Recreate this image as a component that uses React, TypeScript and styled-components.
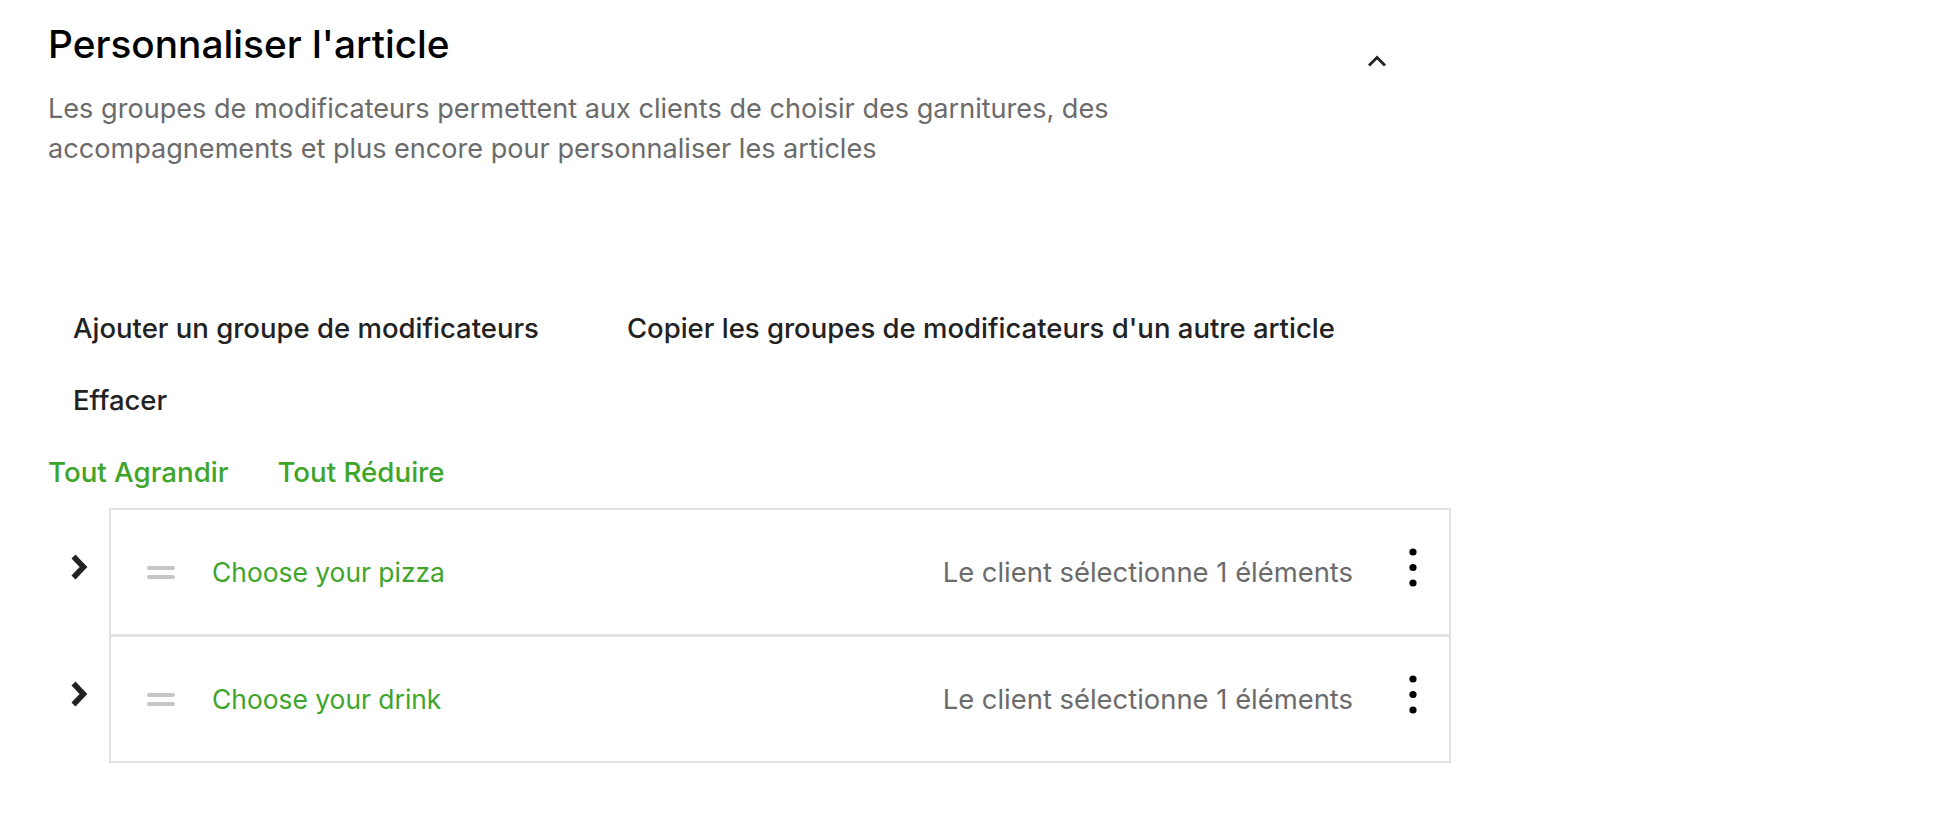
import styled, { createGlobalStyle } from 'styled-components';

const GlobalStyle = createGlobalStyle`
  body {
    margin: 0;
    background: #fff;
    font-family: Inter, 'Liberation Sans', sans-serif;
  }
`;

const Page = styled.div`
  padding: 22px 0 40px 48px;
  width: 1404px;
`;

const Header = styled.header`
  display: flex;
  justify-content: space-between;
  align-items: flex-start;
  width: 1349px;
`;

const HeaderText = styled.div`
  display: flex;
  flex-direction: column;
`;

const Title = styled.h1`
  margin: 0;
  font-size: 38.8px;
  line-height: 44px;
  font-weight: 500;
  color: #000;
`;

const Description = styled.p`
  margin: 23px 0 0;
  max-width: 1100px;
  font-size: 27.1px;
  line-height: 40px;
  color: #6b6b6b;
`;

const CollapseButton = styled.button`
  display: flex;
  align-items: center;
  justify-content: center;

  width: 40px;
  height: 40px;
  margin-top: 19px;

  padding: 0;
  border: none;
  background: none;
  cursor: pointer;
`;

const Actions = styled.div`
  display: flex;
  flex-wrap: wrap;
  column-gap: 38px;
  row-gap: 16px;

  max-width: 1380px;
  margin-top: 131px;
`;

const ActionButton = styled.button`
  height: 56px;
  padding: 0 25px;

  border: none;
  background: none;

  font-family: inherit;
  font-size: 27.5px;
  font-weight: 500;
  color: #222;
  cursor: pointer;
`;

const Toggles = styled.div`
  display: flex;
  gap: 49px;
  margin-top: 28px;
`;

const ToggleLink = styled.button`
  padding: 0;
  border: none;
  background: none;

  font-family: inherit;
  font-size: 27.7px;
  line-height: 32px;
  font-weight: 500;
  color: #3ea52a;
  cursor: pointer;
`;

const Groups = styled.div`
  display: flex;
  flex-direction: column;
  margin-top: 20px;
`;

const GroupLine = styled.div`
  display: flex;
  align-items: stretch;
`;

const Expander = styled.button`
  display: flex;
  align-items: center;
  justify-content: center;

  width: 61px;
  padding: 0 0 11px 0;

  border: none;
  background: none;
  cursor: pointer;
`;

const GroupRow = styled.div<{ $first?: boolean }>`
  display: flex;
  align-items: center;

  width: 1338px;
  height: 124px;

  border: 2px solid #e2e2e2;
  border-top-width: ${({ $first }) => ($first ? '2px' : '1px')};
`;

const Handle = styled.div`
  display: flex;
  flex-direction: column;
  gap: 5px;

  margin-left: 36px;

  span {
    display: block;
    width: 28px;
    height: 4px;
    border-radius: 2px;
    background: #c6c6c6;
  }
`;

const GroupName = styled.span`
  flex: 1;
  margin-left: 37px;

  font-size: 26.4px;
  color: #3ea52a;
`;

const GroupRule = styled.span`
  font-size: 27.4px;
  color: #6b6b6b;
`;

const MoreButton = styled.button`
  display: flex;
  align-items: center;
  justify-content: center;

  width: 40px;
  height: 48px;
  margin: 0 16px 0 40px;

  padding: 0 0 8px;
  border: none;
  background: none;
  cursor: pointer;
`;

const ChevronUp = () => (
  <svg width="20" height="12" viewBox="0 0 20 12">
    <path d="M2 10.5 L10 2.5 L18 10.5" fill="none" stroke="#222" strokeWidth="2.8" />
  </svg>
);

const ChevronRight = () => (
  <svg width="20" height="26" viewBox="0 0 20 26">
    <path d="M4.5 2.5 L14.5 13 L4.5 23.5" fill="none" stroke="#222" strokeWidth="5.6" />
  </svg>
);

const Kebab = () => (
  <svg width="10" height="40" viewBox="0 0 10 40">
    <circle cx="5" cy="4" r="3.6" fill="#000" />
    <circle cx="5" cy="19.5" r="3.6" fill="#000" />
    <circle cx="5" cy="35" r="3.6" fill="#000" />
  </svg>
);

const groups = [
  { name: 'Choose your pizza', rule: 'Le client sélectionne 1 éléments' },
  { name: 'Choose your drink', rule: 'Le client sélectionne 1 éléments' },
];

const App = () => {
  return (
    <Page>
      <GlobalStyle />
      <Header>
        <HeaderText>
          <Title>Personnaliser l'article</Title>
          <Description>
            Les groupes de modificateurs permettent aux clients de choisir des garnitures, des accompagnements et plus
            encore pour personnaliser les articles
          </Description>
        </HeaderText>
        <CollapseButton aria-label="Réduire">
          <ChevronUp />
        </CollapseButton>
      </Header>

      <Actions>
        <ActionButton>Ajouter un groupe de modificateurs</ActionButton>
        <ActionButton>Copier les groupes de modificateurs d'un autre article</ActionButton>
        <ActionButton>Effacer</ActionButton>
      </Actions>

      <Toggles>
        <ToggleLink>Tout Agrandir</ToggleLink>
        <ToggleLink>Tout Réduire</ToggleLink>
      </Toggles>

      <Groups>
        {groups.map((group, i) => (
          <GroupLine key={group.name}>
            <Expander aria-label="Agrandir">
              <ChevronRight />
            </Expander>
            <GroupRow $first={i === 0}>
              <Handle>
                <span />
                <span />
              </Handle>
              <GroupName>{group.name}</GroupName>
              <GroupRule>{group.rule}</GroupRule>
              <MoreButton aria-label="Plus">
                <Kebab />
              </MoreButton>
            </GroupRow>
          </GroupLine>
        ))}
      </Groups>
    </Page>
  );
};

export default App;
